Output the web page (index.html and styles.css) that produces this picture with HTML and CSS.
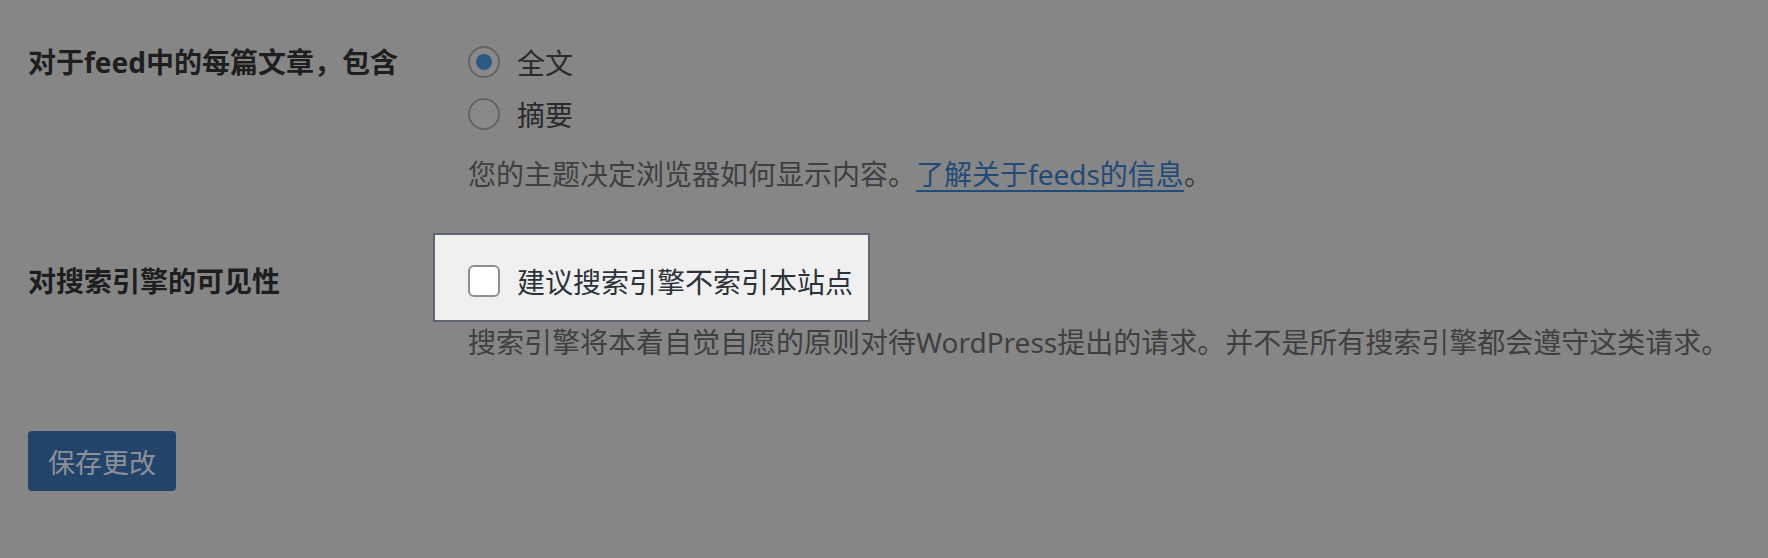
FILE: index.html
```html
<!DOCTYPE html>
<html lang="zh-CN">
<head>
<meta charset="utf-8">
<title>阅读设置</title>
<link rel="stylesheet" href="styles.css">
</head>
<body>
<form class="settings">
  <div class="row row-feed">
    <div class="label">对于feed中的每篇文章，包含</div>
    <div class="field">
      <label class="choice"><input type="radio" name="feed" checked><span>全文</span></label>
      <label class="choice"><input type="radio" name="feed"><span>摘要</span></label>
      <p class="desc">您的主题决定浏览器如何显示内容。<a href="#">了解关于feeds的信息</a>。</p>
    </div>
  </div>
  <div class="row row-search">
    <div class="label label-search">对搜索引擎的可见性</div>
    <div class="field">
      <div class="highlight">
        <label class="choice choice-check"><input type="checkbox"><span>建议搜索引擎不索引本站点</span></label>
      </div>
      <p class="desc desc-tight">搜索引擎将本着自觉自愿的原则对待WordPress提出的请求。并不是所有搜索引擎都会遵守这类请求。</p>
    </div>
  </div>
  <div class="actions">
    <button type="button" class="btn-primary">保存更改</button>
  </div>
</form>
</body>
</html>
```

FILE: styles.css
```css
html, body {
  margin: 0;
  padding: 0;
  background: #868686;
}

body {
  font-family: "Noto Sans", "Noto Sans CJK SC", sans-serif;
  font-size: 28px;
  color: #2a2a2c;
  width: 1768px;
  height: 558px;
  overflow: hidden;
}

.settings {
  padding: 36px 0 0 28px;
}

.row {
  display: flex;
}

.label {
  width: 440px;
  flex: none;
  font-weight: 700;
  color: #1e1e1f;
  line-height: 52px;
}

.label-search {
  padding-top: 28px;
  line-height: 40px;
}

.field {
  display: flex;
  flex-direction: column;
  align-items: flex-start;
}

.choice {
  display: flex;
  align-items: center;
  gap: 17px;
  height: 52px;
  color: #2a2a2c;
}

.choice input {
  appearance: none;
  -webkit-appearance: none;
  margin: 0;
  width: 32px;
  height: 32px;
  box-sizing: border-box;
  flex: none;
  position: relative;
}

.choice input[type="radio"] {
  border: 2px solid #636363;
  border-radius: 50%;
  background: #898989;
}

.choice input[type="radio"]:checked::before {
  content: "";
  position: absolute;
  left: 6px;
  top: 6px;
  width: 16px;
  height: 16px;
  border-radius: 50%;
  background: #2c5986;
}

.choice input[type="checkbox"] {
  border: 2px solid #8c8f94;
  border-radius: 6px;
  background: #ffffff;
}

.desc {
  margin: 14px 0 0;
  line-height: 40px;
  color: #3f3f41;
}

.desc a {
  color: #1f4b78;
  text-decoration: underline;
  text-decoration-thickness: 2px;
  text-underline-offset: 5px;
}

.desc-tight {
  margin-top: 0;
}

.row-search {
  margin-top: 39px;
}

.highlight {
  margin-left: -35px;
  box-sizing: border-box;
  height: 89px;
  padding: 26px 15px 0 33px;
  background: #f0f0f1;
  border: 2px solid #5e6372;
}

.choice-check {
  height: 40px;
  color: #2c3338;
}

.actions {
  margin-top: 69px;
}

.btn-primary {
  font-family: "Noto Sans", "Noto Sans CJK SC", sans-serif;
  font-size: 27px;
  width: 148px;
  height: 60px;
  padding: 0;
  border: none;
  border-radius: 4px;
  background: #23446a;
  color: #8d9096;
  cursor: pointer;
}
```
